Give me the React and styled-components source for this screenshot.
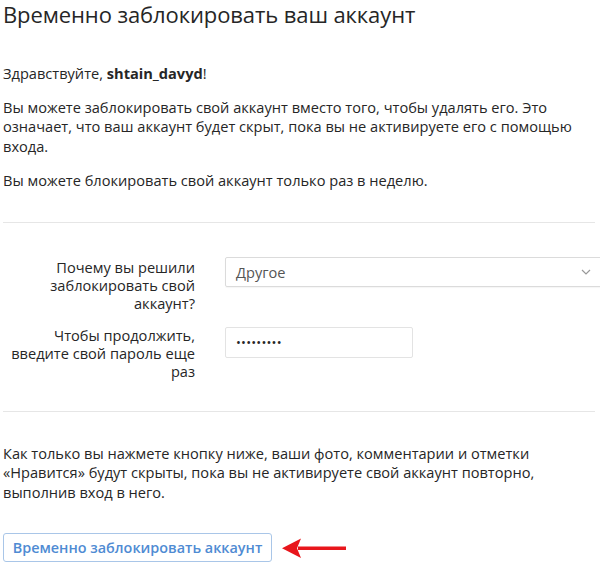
import React from "react";
import styled, { createGlobalStyle } from "styled-components";

const Global = createGlobalStyle`
  html, body { margin: 0; padding: 0; background: #fff; }
  body { font-family: "Open Sans", "Noto Sans", sans-serif; color: #262626; }
`;

const Page = styled.div`
  width: 600px;
  height: 568px;
  overflow: hidden;
  padding: 0 0 0 3px;
  box-sizing: border-box;
`;

const Title = styled.h1`
  margin: 0;
  font-size: 22px;
  font-weight: 400;
  line-height: 28px;
  letter-spacing: -0.1px;
  white-space: nowrap;
`;

const Text = styled.p`
  margin: ${(p) => p.$mt || 0}px 0 0;
  font-size: 14.6px;
  line-height: 19.5px;
  max-width: 590px;
`;

const Divider = styled.hr`
  margin: ${(p) => p.$mt}px 5px 0 0;
  border: 0;
  border-top: 1px solid #e6e6e6;
  height: 0;
`;

const Form = styled.div`
  display: grid;
  grid-template-columns: 192px 1fr;
  column-gap: 30px;
  row-gap: 14px;
  margin-top: 35px;
`;

const Label = styled.label`
  text-align: right;
  font-size: 14.6px;
  font-weight: 500;
  line-height: 18px;
  color: #262626;
`;

const Select = styled.div`
  height: 30px;
  margin-top: -1px;
  margin-right: -20px;
  box-sizing: border-box;
  border: 1px solid #dbdbdb;
  border-radius: 2px;
  display: flex;
  align-items: center;
  justify-content: space-between;
  padding: 0 28px 0 10px;
  font-size: 14.6px;
  color: #555;
  box-shadow: 0 1px 1px rgba(0, 0, 0, 0.04);
`;

const Input = styled.div`
  width: 188px;
  height: 31px;
  margin-top: 1px;
  box-sizing: border-box;
  border: 1px solid #e3e3e3;
  border-radius: 2px;
  display: flex;
  align-items: center;
  padding-left: 10px;
  font-size: 13px;
  letter-spacing: 0.2px;
  color: #262626;
`;

const Footer = styled.div`
  display: flex;
  align-items: center;
  gap: 10px;
  margin-top: 31px;
`;

const Button = styled.button`
  height: 29px;
  padding: 0 8px;
  width: 269px;
  box-sizing: border-box;
  border: 1px solid #a9c6e8;
  border-radius: 3px;
  background: #fff;
  color: #4f8bd3;
  font-family: "Open Sans", "Noto Sans", sans-serif;
  font-size: 14.4px;
  font-weight: 600;
  white-space: nowrap;
`;

export default function App() {
  return (
    <Page>
      <Global />
      <Title>Временно заблокировать ваш аккаунт</Title>
      <Text $mt={36}>
        Здравствуйте, <b>shtain_davyd</b>!
      </Text>
      <Text $mt={14}>
        Вы можете заблокировать свой аккаунт вместо того, чтобы удалять его. Это
        означает, что ваш аккаунт будет скрыт, пока вы не активируете его с помощью
        входа.
      </Text>
      <Text $mt={15}>Вы можете блокировать свой аккаунт только раз в неделю.</Text>
      <Divider $mt={31} />
      <Form>
        <Label>Почему вы решили заблокировать свой аккаунт?</Label>
        <Select>
          <span>Другое</span>
          <svg width="10" height="6" viewBox="0 0 10 6">
            <path d="M1 1l4 4 4-4" fill="none" stroke="#999" strokeWidth="1.2" />
          </svg>
        </Select>
        <Label>Чтобы продолжить, введите свой пароль еще раз</Label>
        <Input>•••••••••</Input>
      </Form>
      <Divider $mt={31} />
      <Text $mt={32}>
        Как только вы нажмете кнопку ниже, ваши фото, комментарии и отметки
        «Нравится» будут скрыты, пока вы не активируете свой аккаунт повторно,
        выполнив вход в него.
      </Text>
      <Footer>
        <Button>Временно заблокировать аккаунт</Button>
        <svg width="66" height="22" viewBox="0 0 66 22">
          <path d="M16 9.5H64v3.5H16z" fill="#e8161c" />
          <path d="M0 11.2L19 1.5 15 11.2 19 21z" fill="#e8161c" />
        </svg>
      </Footer>
    </Page>
  );
}
